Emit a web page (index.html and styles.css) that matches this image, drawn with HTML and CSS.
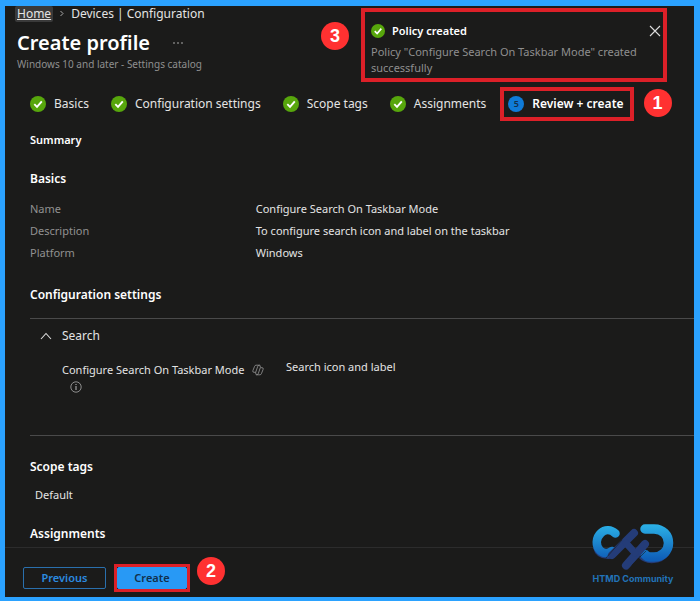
FILE: index.html
```html
<!DOCTYPE html>
<html lang="en">
<head>
    <meta charset="UTF-8">
    <meta name="viewport" content="width=device-width, initial-scale=1.0">
    <title>Create profile</title>
    <link rel="stylesheet" href="styles.css">
</head>
<body>
    <svg class="defs" width="0" height="0" aria-hidden="true">
        <symbol id="check" viewBox="0 0 16 16">
            <circle cx="8" cy="8" r="8" fill="#57a60c"/>
            <path d="M4.3 8.2l2.7 2.7 4.8-5.6" fill="none" stroke="#fff" stroke-width="1.9"/>
        </symbol>
    </svg>
    <div class="page">
        <header class="header">
            <nav class="breadcrumb">
                <a class="home" href="#">Home</a>
                <svg class="sep" viewBox="0 0 6 8"><path d="M1.5 1l2.5 2.5-2.5 2.5" fill="none" stroke="#aaa"/></svg>
                <a href="#">Devices | Configuration</a>
            </nav>
            <div class="title-row">
                <h1>Create profile</h1>
                <button class="more" aria-label="More">
                    <svg viewBox="0 0 12 4"><g fill="#bbb"><circle cx="2" cy="2" r="0.8"/><circle cx="6" cy="2" r="0.8"/><circle cx="10" cy="2" r="0.8"/></g></svg>
                </button>
            </div>
            <p class="subtitle">Windows 10 and later - Settings catalog</p>
        </header>

        <ol class="steps">
            <li><svg class="icon"><use href="#check"/></svg><a href="#">Basics</a></li>
            <li><svg class="icon"><use href="#check"/></svg><a href="#">Configuration settings</a></li>
            <li><svg class="icon"><use href="#check"/></svg><a href="#">Scope tags</a></li>
            <li><svg class="icon"><use href="#check"/></svg><a href="#">Assignments</a></li>
            <li class="current"><span class="number">5</span><a href="#">Review + create</a><span class="marker marker-1">1</span></li>
        </ol>

        <main class="content">
            <h2 class="summary">Summary</h2>

            <h2>Basics</h2>
            <dl class="details">
                <dt>Name</dt><dd>Configure Search On Taskbar Mode</dd>
                <dt>Description</dt><dd>To configure search icon and label on the taskbar</dd>
                <dt>Platform</dt><dd>Windows</dd>
            </dl>

            <h2>Configuration settings</h2>
            <section class="settings">
                <button class="group">
                    <svg class="chevron" viewBox="0 0 12 8"><path d="M1 7l5-5.5L11 7" fill="none" stroke="#ddd" stroke-width="1.1"/></svg>
                    Search
                </button>
                <div class="setting">
                    <div class="setting-name">
                        Configure Search On Taskbar Mode
                        <svg class="copilot" viewBox="0 0 12 12">
                            <g fill="none" stroke="#999" stroke-width="0.8" stroke-linejoin="round">
                                <path d="M7.7 1.2H4.1Q3 1.2 2.6 2.3L.9 6.6Q.3 8.3 2 8.3H3.700L5.700 2.500Q6.200 1.200 7.700 1.200Q8.300 1.400 8.300 3.200"/>
                                <path d="M4.300 10.800H7.900Q9 10.800 9.400 9.700L11.100 5.400Q11.700 3.700 10 3.700H8.300L6.300 9.500Q5.800 10.800 4.300 10.800Q3.700 10.600 3.700 8.300"/>
                            </g>
                        </svg>
                        <svg class="info" viewBox="0 0 12 12"><circle cx="6" cy="6" r="5.2" fill="none" stroke="#aaa" stroke-width="0.8"/><path d="M6 5v4M6 3v1" stroke="#bbb"/></svg>
                    </div>
                    <div class="setting-value">Search icon and label</div>
                </div>
            </section>

            <h2>Scope tags</h2>
            <p class="tag">Default</p>

            <h2>Assignments</h2>
        </main>

        <footer class="footer">
            <button class="btn">Previous</button>
            <span class="highlight"><button class="btn primary">Create</button><span class="marker marker-2">2</span></span>
        </footer>

        <aside class="toast">
            <div class="toast-head">
                <svg class="toast-icon"><use href="#check"/></svg>
                <strong>Policy created</strong>
                <button class="close" aria-label="Close">
                    <svg viewBox="0 0 12 12"><path d="M1 1l10 10M11 1L1 11" stroke="#ddd" stroke-width="1.1"/></svg>
                </button>
            </div>
            <p>Policy "Configure Search On Taskbar Mode" created successfully</p>
            <span class="marker marker-3">3</span>
        </aside>

        <div class="brand">
            <svg viewBox="0 0 82 48">
                <defs>
                    <linearGradient id="blue" gradientUnits="userSpaceOnUse" x1="0" y1="2" x2="0" y2="36">
                        <stop offset="0" stop-color="#2bb0e6"/>
                        <stop offset="1" stop-color="#0f5fb8"/>
                    </linearGradient>
                </defs>
                <!-- dark shadows under the two letters -->
                <path d="M1 25Q4 36 16 36Q22 36 26 31L20 26Z" fill="#243c78"/>
                <path d="M46 34Q52 41 62 40Q72 39 77 32L60 30Z" fill="#243c78"/>
                <g fill="none" stroke-linecap="round" stroke-linejoin="round">
                    <path d="M23.500 10.500C19 6.500 13 6 9 10C3.500 15 3.500 23 8 27.500C11 30.500 16 31 20 28" stroke="url(#blue)" stroke-width="8.500"/>
                    <path d="M53 6H62C71 6 76.500 12.500 76.500 20C76.500 28 70 34 62 34H58Q55 34 53 31.500" stroke="url(#blue)" stroke-width="9.500"/>
                    <path d="M42 10L20 32M53 21L34 42.500" stroke="#243c78" stroke-width="8"/>
                    <path d="M34 20L43 30" stroke="#243c78" stroke-width="7"/>
                    <path d="M14 35L30 17M40 42L54 28" stroke="#1b1b1a" stroke-width="0.6"/>
                </g>
            </svg>
            <span>HTMD Community</span>
        </div>
    </div>
</body>
</html>
```

FILE: styles.css
```css
* {
    box-sizing: border-box;
}

body {
    margin: 0;
    font-family: 'Noto Sans', 'Open Sans', sans-serif;
    font-size: 11px;
    line-height: 16px;
    color: #e4e4e4;
    background-color: #2ba2ff;
}

h1, h2, p, dl, dd, ol {
    margin: 0;
    padding: 0;
}

a {
    color: inherit;
    text-decoration: none;
}

button {
    font: inherit;
    color: inherit;
    background: none;
    border: none;
    padding: 0;
    cursor: pointer;
}

svg {
    flex-shrink: 0;
}

.defs {
    position: absolute;
}

.page {
    position: relative;
    display: flex;
    flex-direction: column;
    height: 100vh;
    border: solid #2ba2ff;
    border-width: 6px 6px 4px 5px;
    background-color: #1b1b1a;
}

.header {
    padding-left: 12px;
}

.breadcrumb {
    display: flex;
    align-items: center;
    gap: 6px;
    font-size: 12px;
}

.home {
    margin-left: -2px;
    padding: 0 2px;
    background-color: #3a3a3a;
    border-radius: 2px;
    text-decoration: underline;
}

.sep {
    width: 6px;
    height: 8px;
}

.title-row {
    display: flex;
    align-items: center;
    gap: 22px;
    margin-top: 7px;
}

h1 {
    font-size: 20px;
    line-height: 28px;
    font-weight: 600;
    color: #fff;
}

.more {
    display: flex;
}

.more svg {
    width: 12px;
    height: 4px;
}

.subtitle {
    font-size: 10px;
    line-height: 14px;
    color: #8f8f8f;
}

.steps {
    display: flex;
    align-items: center;
    gap: 22px;
    height: 34px;
    margin-top: 16px;
    padding-left: 25px;
    list-style: none;
    font-size: 12px;
    white-space: nowrap;
}

.steps li {
    display: flex;
    align-items: center;
    gap: 8px;
}

.icon, .number {
    width: 16px;
    height: 16px;
}

.number {
    border-radius: 50%;
    background-color: #0f7bd8;
    color: #12304c;
    font-size: 9px;
    text-align: center;
}

.steps .current {
    position: relative;
    height: 34px;
    margin-left: -8px;
    padding: 0 6px 0 4px;
    border: 4px solid #dc2028;
    font-weight: 600;
    color: #fff;
}

.marker {
    position: absolute;
    width: 28px;
    height: 28px;
    border-radius: 50%;
    background-color: #ff3131;
    color: #fff;
    font: bold 18px/28px 'Liberation Sans', sans-serif;
    text-align: center;
}

.marker-1 {
    top: -2px;
    right: -42px;
}

.marker-2 {
    top: -10px;
    right: -38px;
}

.marker-3 {
    top: 10px;
    left: -44px;
}

.content {
    flex: 1;
    min-height: 0;
    padding-left: 25px;
    overflow: hidden;
}

h2 {
    margin-top: 23px;
    font-size: 12px;
    font-weight: 600;
    color: #fff;
}

.summary {
    margin-top: 11px;
    font-size: 11px;
}

.details {
    display: grid;
    grid-template-columns: 34% 1fr;
    margin-top: 11px;
    line-height: 22px;
}

dt {
    color: #919191;
}

.settings {
    height: 118px;
    margin-top: 15px;
    padding-top: 9px;
    border-top: 1px solid #4a4a4a;
    border-bottom: 1px solid #4a4a4a;
}

.group {
    display: flex;
    align-items: center;
    gap: 10px;
    padding-left: 10px;
    font-size: 12px;
}

.chevron {
    width: 12px;
    height: 8px;
}

.setting {
    display: grid;
    grid-template-columns: 224px 1fr;
    margin-top: 15px;
    padding-left: 32px;
}

.setting-name {
    padding-top: 2px;
    line-height: 18px;
}

.copilot {
    width: 12px;
    height: 12px;
    margin-left: 5px;
    vertical-align: -2px;
}

.info {
    display: block;
    width: 12px;
    height: 12px;
    margin: 2px 0 0 8px;
}

.tag {
    margin-top: 12px;
    padding-left: 5px;
}

.footer {
    display: flex;
    align-items: center;
    gap: 8px;
    height: 50px;
    padding: 10px 0 0 18px;
    border-top: 1px solid #2c2c2c;
}

.btn {
    width: 83px;
    height: 22px;
    border: 1px solid #2a70ad;
    border-radius: 2px;
    font-weight: 600;
    color: #2b8be0;
}

.highlight {
    position: relative;
    display: flex;
    border: 3px solid #dc2028;
}

.primary {
    width: 70px;
    border-color: #2899f5;
    background-color: #2899f5;
    color: #12304c;
}

.toast {
    position: absolute;
    top: 2px;
    right: 27px;
    width: 306px;
    height: 74px;
    padding: 11px 2px 0 6px;
    border: 4px solid #dc2028;
    background-color: #1b1b1a;
    color: #8f8f8f;
}

.toast-head {
    display: flex;
    align-items: center;
    gap: 7px;
    margin-bottom: 5px;
    color: #fff;
}

.toast-head strong {
    font-weight: 600;
}

.toast-icon {
    width: 14px;
    height: 14px;
}

.close {
    display: flex;
    margin-left: auto;
}

.close svg {
    width: 12px;
    height: 12px;
}

.brand {
    position: absolute;
    right: 20px;
    bottom: 10px;
    display: flex;
    flex-direction: column;
    align-items: center;
    width: 82px;
    color: #2273b8;
    font: bold 9px/16px Inter, sans-serif;
    white-space: nowrap;
}

.brand svg {
    width: 82px;
    height: 48px;
}
```
